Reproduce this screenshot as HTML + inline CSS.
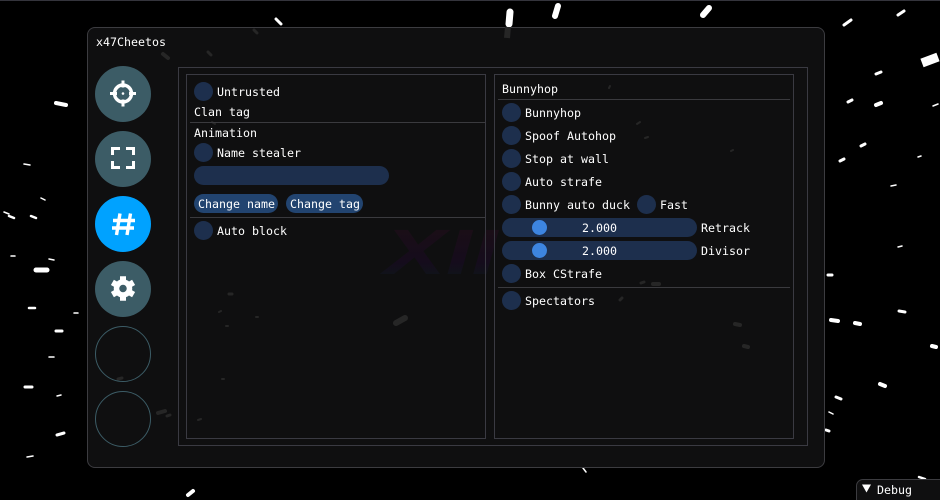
<!DOCTYPE html>
<html style="overflow:hidden;width:940px;height:500px"><head><meta charset="utf-8"><style>
html,body{margin:0;padding:0;background:#000}
body{position:relative;width:940px;height:500px;overflow:hidden;font-family:"DejaVu Sans Mono","Liberation Mono",monospace;font-size:11.63px;line-height:14px;color:#fff}
div{position:absolute;box-sizing:border-box}
svg{position:absolute;left:0;top:0}
.t{white-space:pre;height:14px}
.c{width:19px;height:19px;border-radius:50%;background:#1d2f4d}
.b{border:1px solid #3a3a42}
.h{height:1px;background:#3a3a3e}
.pill{height:19px;border-radius:9.5px}
#root{left:0;top:0;width:940px;height:500px;overflow:hidden}
</style></head><body>
<div id="root">
<div style="left:0;top:0;width:940px;height:1px;background:#34343c"></div>
<svg width="940" height="500" fill="none" stroke="#fff" stroke-linecap="round">
<g stroke-width="3"><path d="M276 19L281 24M844 25L851 20M898 15L904 11M876 74L881 72M848 102L852 100M861 146L865 144M840 161L844 159M828 275L832 275M899 311L905 312M836 397L841 399M56 331L62 331M25 387L32 387M57 435L64 433M826 430L829 431"/></g>
<path stroke-width="7" d="M510 12L509 24"/>
<path stroke-width="6" d="M558 6L555 16M709 8L703 15"/>
<path stroke-width="9" stroke-linecap="butt" d="M922 63L938 57"/>
<path stroke-width="4" d="M876 105L881 103M831 320L838 321M855 323L860 324M932 346L936 347M880 384L885 386M188 495L193 491M56 103L66 105"/>
<path stroke-width="5" d="M36 270L47 270"/>
<path stroke-width="1.5" d="M898 247L902 246M918 157L921 156M933 106L938 104M891 186L896 185M41 198L45 200M4 212L9 214M11 256L15 256M49 259L54 260M74 313L78 313M49 357L54 357M57 396L61 395M27 457L33 456M829 412L833 414M24 164L30 165M583 468L586 472"/>
<path stroke-width="2.5" d="M9 216L14 218M31 216L36 218M29 308L35 308M919 477L925 479"/>
</svg>
<div style="left:87px;top:27px;width:738px;height:441px;background:#0f0f10;border:1px solid #3c3c40;border-radius:8px"></div>
<svg width="940" height="500" fill="none" stroke="#262626" stroke-linecap="round">
<defs><linearGradient id="lg" x1="0" y1="0" x2="0" y2="1"><stop offset="0" stop-color="#0f1c1a"/><stop offset=".12" stop-color="#1b0e16"/><stop offset=".65" stop-color="#150c1c"/><stop offset=".9" stop-color="#0e1619"/><stop offset="1" stop-color="#0f0f10"/></linearGradient></defs>
<text transform="translate(384 274) scale(1.45 1)" font-family="Liberation Sans" font-weight="700" font-style="italic" font-size="64" fill="url(#lg)" stroke="none">XII</text>
<path stroke-width="6" stroke="#262626" d="M396 323L405 318"/>
<path stroke-width="6" stroke-linecap="butt" d="M508 27L507 38"/>
<path stroke-width="4" d="M163 54L168 58M158 413L165 411M744 346L748 347M735 324L740 325M653 284L659 284"/>
<path stroke-width="3" d="M208 52L211 55M254 30L257 33M167 416L170 415M118 379L122 378M229 294L232 294M620 300L622 298M641 283L644 282"/>
<path stroke-width="2" d="M256 317L258 317M226 326L228 326M219 312L221 311M212 122L215 124M609 88L610 86M637 124L640 122M731 151L733 150M645 138L648 137M198 420L201 419M222 379L224 379"/>
</svg>
<div class="t" style="left:96px;top:35px">x47Cheetos</div>

<div style="left:95px;top:66px;width:56px;height:56px;border-radius:50%;background:#3c5c66"></div>
<div style="left:95px;top:131px;width:56px;height:56px;border-radius:50%;background:#3c5c66"></div>
<div style="left:95px;top:196px;width:56px;height:56px;border-radius:50%;background:#00a2ff"></div>
<div style="left:95px;top:261px;width:56px;height:56px;border-radius:50%;background:#3c5c66"></div>
<div style="left:95px;top:326px;width:56px;height:56px;border-radius:50%;border:1px solid #3c5c66"></div>
<div style="left:95px;top:391px;width:56px;height:56px;border-radius:50%;border:1px solid #3c5c66"></div>
<svg width="940" height="500" fill="none" stroke="#fff">
<circle cx="123" cy="93.5" r="8.5" stroke-width="3.4"/>
<path stroke-width="3" d="M123 80.500V87.500M123 99.500V106.500M110 93.500H117M129 93.500H136"/>
<circle cx="123" cy="93.500" r="1.300" fill="#fff" stroke="none"/>
<path stroke-width="3" d="M112.500 155V148.500H120M126 148.500H133.500V155M112.500 161V167.500H120M126 167.500H133.500V161"/>
<path stroke-width="3.400" d="M120 213.500L116.500 235M130.500 213.500L127 235M113 220.500H135M112 228H134"/>
<g transform="translate(123 288.500)"><circle r="6.500" stroke-width="5.500"/>
<g stroke-width="6"><path d="M0 -8V-12.300M0 8V12.300M6.900 -4L10.600 -6.150M-6.900 4L-10.600 6.150M6.900 4L10.600 6.150M-6.900 -4L-10.600 -6.150"/></g></g>
</svg>

<div class="b" style="left:178px;top:67px;width:630px;height:379px"></div>
<div class="b" style="left:186px;top:74px;width:300px;height:365px"></div>
<div class="b" style="left:494px;top:74px;width:300px;height:365px"></div>

<div class="c" style="left:194px;top:82px"></div><div class="t" style="left:217px;top:85px">Untrusted</div>
<div class="t" style="left:194px;top:105px">Clan tag</div>
<div class="h" style="left:190px;top:122px;width:295px"></div>
<div class="t" style="left:194px;top:126px">Animation</div>
<div class="c" style="left:194px;top:143px"></div><div class="t" style="left:217px;top:146px">Name stealer</div>
<div class="pill" style="left:194px;top:166px;width:195px;background:#1d2f4d"></div>
<div class="pill" style="left:194px;top:194px;width:84px;background:#224470"></div><div class="t" style="left:198px;top:197px">Change name</div>
<div class="pill" style="left:286px;top:194px;width:77px;background:#224470"></div><div class="t" style="left:290px;top:197px">Change tag</div>
<div class="h" style="left:190px;top:217px;width:295px"></div>
<div class="c" style="left:194px;top:221px"></div><div class="t" style="left:217px;top:224px">Auto block</div>

<div class="t" style="left:502px;top:82px">Bunnyhop</div>
<div class="h" style="left:498px;top:99px;width:292px"></div>
<div class="c" style="left:502px;top:103px"></div><div class="t" style="left:525px;top:106px">Bunnyhop</div>
<div class="c" style="left:502px;top:126px"></div><div class="t" style="left:525px;top:129px">Spoof Autohop</div>
<div class="c" style="left:502px;top:149px"></div><div class="t" style="left:525px;top:152px">Stop at wall</div>
<div class="c" style="left:502px;top:172px"></div><div class="t" style="left:525px;top:175px">Auto strafe</div>
<div class="c" style="left:502px;top:195px"></div><div class="t" style="left:525px;top:198px">Bunny auto duck</div>
<div class="c" style="left:637px;top:195px"></div><div class="t" style="left:660px;top:198px">Fast</div>
<div class="pill" style="left:502px;top:218px;width:195px;background:#1d2f4d"></div>
<div style="left:532px;top:220px;width:15px;height:15px;border-radius:50%;background:#3d85e0"></div>
<div class="t" style="left:582px;top:221px">2.000</div><div class="t" style="left:701px;top:221px">Retrack</div>
<div class="pill" style="left:502px;top:241px;width:195px;background:#1d2f4d"></div>
<div style="left:532px;top:243px;width:15px;height:15px;border-radius:50%;background:#3d85e0"></div>
<div class="t" style="left:582px;top:244px">2.000</div><div class="t" style="left:701px;top:244px">Divisor</div>
<div class="c" style="left:502px;top:264px"></div><div class="t" style="left:525px;top:267px">Box CStrafe</div>
<div class="h" style="left:498px;top:287px;width:292px"></div>
<div class="c" style="left:502px;top:291px"></div><div class="t" style="left:525px;top:294px">Spectators</div>

<div style="left:856px;top:479px;width:90px;height:30px;background:#0f0f10;border:1px solid #3c3c40;border-radius:7px 0 0 0"></div>
<svg width="940" height="500"><path d="M862 484.500H871L866.500 492.500Z" fill="#fff"/></svg>
<div class="t" style="left:877px;top:483px">Debug</div>
</div>
</body></html>
